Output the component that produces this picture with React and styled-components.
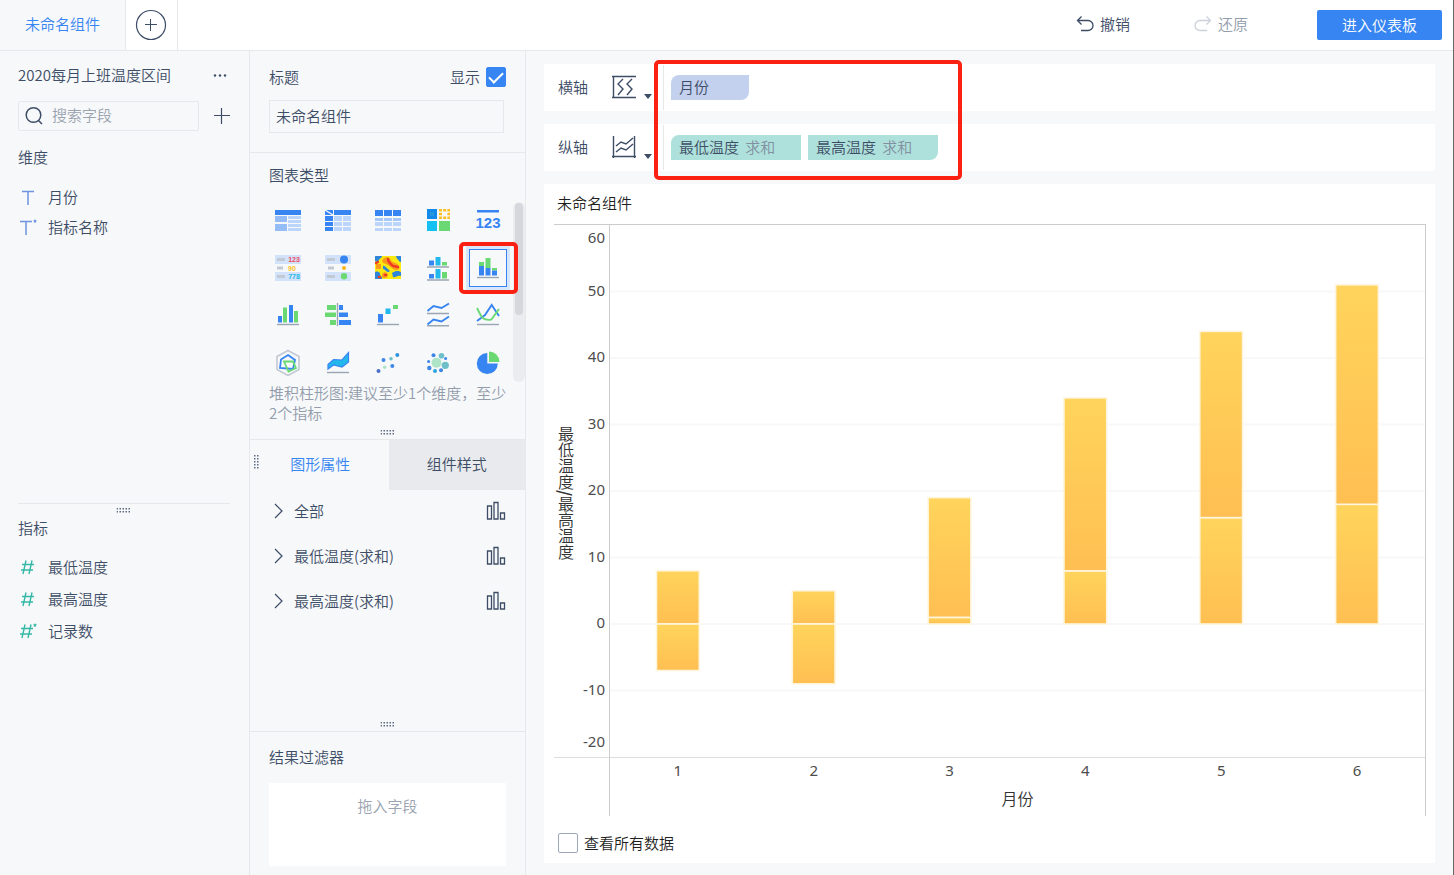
import React, { useState } from "react";
import styled, { createGlobalStyle } from "styled-components";

const BLUE = "#3685f2";
const GREEN = "#6bd973";
const CYAN = "#22b8ec";
const LIGHT = "#bcd5fa";
const LINE = "#9aa5b4";

const chartTypes = [
  "分组表",
  "交叉表",
  "明细表",
  "颜色表格",
  "KPI指标卡",
  "文本",
  "图标",
  "热力图",
  "多系列柱形图",
  "堆积柱形图",
  "对比柱状图",
  "对比条形图",
  "瀑布图",
  "多系列折线图",
  "折线图",
  "雷达图",
  "面积图",
  "散点图",
  "聚合气泡图",
  "饼图",
];

const dimensions = [
  { name: "月份", type: "text" },
  { name: "指标名称", type: "text", star: true },
];
const measures = [
  { name: "最低温度", type: "number" },
  { name: "最高温度", type: "number" },
  { name: "记录数", type: "number", star: true },
];
const attributes = ["全部", "最低温度(求和)", "最高温度(求和)"];

// every segment is [from, to] on the value axis
const months = [
  { month: 1, segments: [[0, 8], [-7, 0]] },
  { month: 2, segments: [[0, 5], [-9, 0]] },
  { month: 3, segments: [[0, 1], [1, 19]] },
  { month: 4, segments: [[0, 8], [8, 34]] },
  { month: 5, segments: [[0, 16], [16, 44]] },
  { month: 6, segments: [[0, 18], [18, 51]] },
];
const ticks = [60, 50, 40, 30, 20, 10, 0, -10, -20];
const MAX = 60;
const RANGE = 80;
const toY = (value) => ((MAX - value) / RANGE) * 100;

const chartIcons = [
  <>
    <path fill={BLUE} d="M1 3h26v5H1z" />
    <path fill="#94bdf8" d="M1 9h12v6H1zM1 17h12v7H1z" />
    <path fill={LIGHT} d="M14 9h13v3H14zM14 13h13v3H14zM14 17h13v3H14zM14 21h13v3H14z" />
  </>,
  <>
    <path fill={BLUE} d="M1 3h8v5H1zM10 3h17v5H10zM1 9h8v5H1zM1 15h8v4H1zM1 20h8v4H1z" />
    <path fill={LIGHT} d="M10 9h8v5h-8zM19 9h8v5h-8zM10 15h8v4h-8zM19 15h8v4h-8zM10 20h8v4h-8zM19 20h8v4h-8z" />
    <path stroke="#f7f8fa" strokeWidth="1.4" d="M1 3l8 5" />
  </>,
  <>
    <path fill={BLUE} d="M1 3h8v6H1zM10 3h8v6h-8zM19 3h8v6h-8z" />
    <path fill="#a5c8f9" d="M1 11h8v3H1zM10 11h8v3h-8zM19 11h8v3h-8z" />
    <path fill={LIGHT} d="M1 15h8v4H1zM10 15h8v4h-8zM19 15h8v4h-8zM1 21h8v3H1zM10 21h8v3h-8zM19 21h8v3h-8z" />
  </>,
  <>
    <path fill="#1489ec" d="M3 2h10v10H3z" />
    <path fill="#2697dd" d="M6 5h4v4H6z" />
    <path
      fill="#fbbf24"
      d="M15 2h3v2.500h-3zM19.200 2h3v2.500h-3zM23.400 2h2.600v2.500h-2.600zM15 5.800h3v2.500h-3zM23.400 5.800h2.600v2.500h-2.600zM15 9.500h3v2.500h-3zM19.200 9.500h3v2.500h-3zM23.400 9.500h2.600v2.500h-2.600z"
    />
    <path fill="#15c0f3" d="M3 14h10v10H3z" />
    <path fill={GREEN} d="M15 14h11v10H15z" />
  </>,
  <>
    <path fill={BLUE} d="M3 3h22v2.5H3z" />
    <text x="14" y="21" fontSize="15" fontWeight="700" textAnchor="middle" fill={BLUE}>123</text>
  </>,
  <>
    <path fill="#d3e2fb" d="M1 1h26v9H1zM1 18h26v9H1z" />
    <path fill="#c3c9d3" d="M3 4h8v3H3zM3 12.5h6v3H3zM3 21h8v3H3z" />
    <text x="20" y="8" fontSize="7" fontWeight="700" textAnchor="middle" fill="#ef4b5f">123</text>
    <text x="18" y="16.500" fontSize="7" fontWeight="700" textAnchor="middle" fill="#fbbf24">90</text>
    <text x="20" y="25" fontSize="7" fontWeight="700" textAnchor="middle" fill={CYAN}>778</text>
  </>,
  <>
    <path fill="#d3e2fb" d="M1 1h26v9H1zM1 18h26v9H1z" />
    <path fill="#c3c9d3" d="M3 4h8v3H3zM4 12.5h6v3H4zM3 21h8v3H3z" />
    <circle cx="20" cy="5.500" r="4" fill={BLUE} />
    <circle cx="20" cy="14" r="2" fill="#fbb414" />
    <circle cx="20" cy="22.300" r="3.200" fill={GREEN} />
  </>,
  <>
    <path fill="#fde910" d="M1 2h26v23H1z" />
    <path fill="#2f86d8" d="M1 2h7c0 2-2 2-3 4S2 8 1 7zM22 2h5v6c-3 0-2-3-4-3zM1 18c3-1 5 0 5 2s3 3 2 5H1zM18 19c4-3 7-2 9-1v4c-4-1-5 2-8 1zM9 12c2-1 3 2 5 3s2 3 0 3-3-3-5-3z" />
    <path fill="#fb9a1a" d="M9 5c3-3 7-2 8 1s6 2 8 6-3 5-6 3-4-4-7-5-5-2-3-5zM2 10h5v5H2zM8 20c2-3 6-2 6 1s-4 4-6 2z" />
    <path fill="none" stroke="#ee3a24" strokeWidth="2.400" strokeLinecap="round" d="M14 5c0 4 3 5 5 7l5 1M11 21h1M2 9l2-1M5 23l1 0" />
  </>,
  <>
    <path fill={BLUE} d="M5 6.500h5v5H5zM5 20h5v4.500H5z" />
    <path fill={CYAN} d="M11.500 3h5v8.500h-5zM11.500 15h5v9.500h-5z" />
    <path fill={GREEN} d="M18 8h5v3.500h-5zM18 18h5v6.500h-5z" />
    <path stroke={LINE} strokeWidth="1.400" d="M3 13h22M3 26h22" />
  </>,
  <>
    <path fill={GREEN} d="M5 8h5v4H5zM11.500 4h5v10h-5zM18 14h5v2.500h-5z" />
    <path fill={BLUE} d="M5 12h5v9.500H5zM11.500 14h5v7.500h-5zM18 16.500h5v5h-5z" />
    <path stroke={LINE} strokeWidth="1.400" d="M3 23.500h22" />
  </>,
  <>
    <path fill={BLUE} d="M4 15h4v6.500H4zM15 4h4v17.500h-4z" />
    <path fill={GREEN} d="M9 6.500h4v15H9zM20 10h4v11.500h-4z" />
    <path stroke={LINE} strokeWidth="1.400" d="M3 23.500h22" />
  </>,
  <>
    <path fill={GREEN} d="M3 4h9v5H3zM1 11.500h11v4.500H1zM6 19h6v5H6z" />
    <path fill={BLUE} d="M15 4h4v5h-4zM15 11.500h9v4.500h-9zM15 19h12v5H15z" />
    <path stroke={LINE} strokeWidth="1.400" d="M13.500 2v23" />
  </>,
  <>
    <path fill={BLUE} d="M4 13h5v8.500H4z" />
    <path fill={CYAN} d="M11.500 7.500h5v5.500h-5z" />
    <path fill={GREEN} d="M19 4h5v4h-5z" />
    <path stroke={LINE} strokeWidth="1.400" d="M3 23.500h22" />
  </>,
  <>
    <path fill="none" stroke={BLUE} strokeWidth="1.900" d="M3.500 10l6-5 8 2L25 2.500M3.500 23.500l6-5 8 2 7.500-5" />
    <path stroke={LINE} strokeWidth="1.400" d="M3 12.500h22M3 24.800h22" />
  </>,
  <>
    <path fill="none" stroke={BLUE} strokeWidth="1.900" d="M3 20l8-6 6.700-10L25 15" />
    <path fill="none" stroke={GREEN} strokeWidth="1.900" d="M3 7c4 8 5 11 9 11.500s5 1 6.500-1.500L25 8" />
    <path stroke={LINE} strokeWidth="1.400" d="M3 23.500h22" />
  </>,
  <>
    <path fill="none" stroke="#c3c9d3" strokeWidth="1.600" d="M14 2.500l11 6v13l-11 6-11-6v-13z" />
    <path fill="none" stroke={BLUE} strokeWidth="1.800" d="M14 7l7 5-2 9-13-1 1-8.500z" />
    <path fill="none" stroke={GREEN} strokeWidth="1.800" d="M10 13.500h9l3 6.500-7.500 3.500z" />
  </>,
  <>
    <path fill={CYAN} stroke={BLUE} strokeWidth="1.200" d="M4 16.500l5.500-5 8.500.500 6.500-7.500v9.500l-6.500 5-8.500-2-5.500 4z" />
    <path stroke={LINE} strokeWidth="1.400" d="M3 24.500h22" />
  </>,
  <>
    <circle cx="4.500" cy="23" r="2" fill="#4a6fc9" />
    <circle cx="9.500" cy="12" r="2" fill="#3f86e6" />
    <circle cx="10.700" cy="19.300" r="1.800" fill="#aee5c8" />
    <circle cx="17" cy="10.700" r="1.800" fill="#6fbfca" />
    <circle cx="18.300" cy="18" r="2" fill="#3f86e6" />
    <circle cx="23.300" cy="7" r="2" fill="#2f93dc" />
  </>,
  <>
    <circle cx="12.500" cy="14.700" r="5" fill="#aee5c8" />
    <circle cx="9.500" cy="7.200" r="2" fill="#3f86e6" />
    <circle cx="17.500" cy="7.700" r="2.800" fill="#6fbfca" />
    <circle cx="21.600" cy="10.500" r="1.500" fill="#3f86e6" />
    <circle cx="21.300" cy="17.300" r="3.600" fill="#6fbfca" />
    <circle cx="17" cy="22.200" r="2" fill="#3f86e6" />
    <circle cx="11" cy="23" r="2" fill="#2fa4dc" />
    <circle cx="5.300" cy="20" r="2.200" fill="#3f86e6" />
    <circle cx="4.600" cy="13.500" r="1.500" fill="#3f86e6" />
  </>,
  <>
    <path fill={BLUE} d="M13.300 15.500V5a10.500 10.500 0 1 0 10.500 10.500z" />
    <path fill={GREEN} d="M15 14V3.500A10.500 10.500 0 0 1 25.500 14z" />
  </>,
];

const Grip = ({ vertical }) => (
  <GripIcon width={vertical ? 5 : 15} height={vertical ? 15 : 5} $vertical={vertical}>
    {[0, 1, 2, 3, 4].map((i) =>
      [0, 3].map((j) => (
        <rect
          key={`${i}${j}`}
          x={vertical ? j : i * 3}
          y={vertical ? i * 3 : j}
          width="1.5"
          height="1.5"
          fill="#5d6b82"
        />
      ))
    )}
  </GripIcon>
);

const FieldIcon = ({ type, star }) => (
  <svg width="20" height="20" viewBox="0 0 20 20" fill="none" aria-hidden="true">
    {type === "text" ? (
      <path stroke="#6f93de" strokeWidth="1.500" d={star ? "M2 4.500h12M8 4.500V18" : "M4 4.500h12M10 4.500V18"} />
    ) : (
      <path
        stroke="#36b8a6"
        strokeWidth="1.400"
        d={star ? "M7 3.500L4 17M13 3.500L10 17M3 7.500h12M2 13h12" : "M8 3.500L5 17M14 3.500L11 17M4 7.500h12M3 13h12"}
      />
    )}
    {star && (
      <path
        fill={type === "text" ? "#6f93de" : "#36b8a6"}
        d="M17 2l.6 1.300 1.400.200-1 1 .200 1.500-1.200-.700-1.200.700.200-1.500-1-1 1.400-.200z"
      />
    )}
  </svg>
);

const Fields = ({ items, tall }) => (
  <FieldList>
    {items.map((item) => (
      <Field key={item.name} $tall={tall}>
        <FieldIcon type={item.type} star={item.star} />
        {item.name}
      </Field>
    ))}
  </FieldList>
);

const BarChart = () => (
  <Chart>
    <ValueAxis>
      <AxisTitle>
        最低温度<b>/</b>最高温度
      </AxisTitle>
      <TickLabels>
        {ticks.map((tick) => (
          <text
            key={tick}
            x="100%"
            y={`${toY(tick)}%`}
            dy={tick === 60 ? 18 : tick === -20 ? -10 : 4}
            textAnchor="end"
          >
            {tick}
          </text>
        ))}
      </TickLabels>
    </ValueAxis>
    <Plot>
      <svg width="100%" height="100%">
        <defs>
          <linearGradient id="bar" x1="0" y1="0" x2="0" y2="1">
            <stop offset="0" stopColor="#ffd45c" />
            <stop offset="1" stopColor="#ffbf52" />
          </linearGradient>
        </defs>
        {ticks.slice(1, -1).map((tick) => (
          <line key={tick} x1="0" x2="100%" y1={`${toY(tick)}%`} y2={`${toY(tick)}%`} stroke="#f8f8f9" strokeWidth="2" />
        ))}
        {months.map(({ month, segments }, i) =>
          segments.map(([from, to]) => (
            <rect
              key={`${month}${from}`}
              x={`${((i + 0.342) / 6) * 100}%`}
              y={`${toY(to)}%`}
              width="5.25%"
              height={`${((to - from) / RANGE) * 100}%`}
              fill="url(#bar)"
              stroke="#fff5de"
              strokeWidth="1.600"
            />
          ))
        )}
      </svg>
    </Plot>
    <Corner />
    <CategoryAxis>
      <Categories>
        {months.map(({ month }) => (
          <span key={month}>{month}</span>
        ))}
      </Categories>
      <CategoryTitle>月份</CategoryTitle>
    </CategoryAxis>
  </Chart>
);

const App = () => {
  const [selected, setSelected] = useState(9);
  const [tab, setTab] = useState(0);
  const [title, setTitle] = useState("未命名组件");
  const [showTitle, setShowTitle] = useState(true);
  const [allData, setAllData] = useState(false);

  return (
    <Page>
      <GlobalStyle />
      <Header>
        <ComponentTab>未命名组件</ComponentTab>
        <AddTab>
          <IconButton aria-label="添加组件">
            <svg width="32" height="32" viewBox="0 0 32 32" fill="none" stroke="#3d4d66">
              <circle cx="16" cy="16" r="14.500" strokeWidth="1.200" />
              <path d="M10 15.500h12M15.500 10v12" />
            </svg>
          </IconButton>
        </AddTab>
        <Actions>
          <HistoryButton>
            <svg width="18" height="18" viewBox="0 0 18 18" fill="none" stroke="currentColor" strokeWidth="1.300">
              <path d="M5.500 1.500L1.500 5.500l4 4M1.500 5.500H12a5 5 0 0 1 0 10H5" />
            </svg>
            撤销
          </HistoryButton>
          <HistoryButton disabled>
            <svg width="18" height="18" viewBox="0 0 18 18" fill="none" stroke="#ccd1d9" strokeWidth="1.300">
              <path d="M12.500 1.500l4 4-4 4M16.500 5.500H6a5 5 0 0 0 0 10h7" />
            </svg>
            还原
          </HistoryButton>
          <EnterButton>进入仪表板</EnterButton>
        </Actions>
      </Header>

      <Body>
        <Sidebar>
          <DimensionArea>
            <TableName>
              2020每月上班温度区间
              <IconButton aria-label="更多">
                <svg width="16" height="16" fill="#3d4d66">
                  <circle cx="3" cy="8.500" r="1.200" />
                  <circle cx="8" cy="8.500" r="1.200" />
                  <circle cx="13" cy="8.500" r="1.200" />
                </svg>
              </IconButton>
            </TableName>
            <SearchRow>
              <SearchBox>
                <svg width="20" height="20" viewBox="0 0 20 20" fill="none" stroke="#3d4d66" strokeWidth="1.500">
                  <circle cx="9.500" cy="9" r="7.300" />
                  <path d="M14.500 14.500l3.500 3.500" />
                </svg>
                <input type="text" placeholder="搜索字段" aria-label="搜索字段" />
              </SearchBox>
              <IconButton aria-label="添加字段">
                <svg width="16" height="16" fill="none" stroke="#3d4d66" strokeWidth="1.200">
                  <path d="M0 7.500h16M7.500 0v16" />
                </svg>
              </IconButton>
            </SearchRow>
            <FieldHeading>维度</FieldHeading>
            <Fields items={dimensions} />
          </DimensionArea>
          <MeasureArea>
            <Grip />
            <FieldHeading>指标</FieldHeading>
            <Fields items={measures} tall />
          </MeasureArea>
        </Sidebar>

        <Settings>
          <TitleSection>
            <TitleRow>
              <label htmlFor="title">标题</label>
              <CheckLabel>
                显示
                <Checkbox type="checkbox" checked={showTitle} onChange={() => setShowTitle(!showTitle)} />
              </CheckLabel>
            </TitleRow>
            <TitleInput id="title" type="text" value={title} onChange={(e) => setTitle(e.target.value)} />
          </TitleSection>

          <TypeSection>
            <SectionName>图表类型</SectionName>
            <TypeScroll>
              <TypeGrid>
                {chartTypes.map((name, i) => (
                  <TypeButton key={name} aria-label={name} $active={i === selected} onClick={() => setSelected(i)}>
                    <svg width="28" height="28" viewBox="0 0 28 28">
                      {chartIcons[i]}
                    </svg>
                    {i === 9 && <TypeMark />}
                  </TypeButton>
                ))}
              </TypeGrid>
              <Scrollbar>
                <ScrollThumb />
              </Scrollbar>
            </TypeScroll>
            <Hint>堆积柱形图:建议至少1个维度，至少2个指标</Hint>
            <Grip />
          </TypeSection>

          <AttributeSection>
            <Tabs>
              <Grip vertical />
              {["图形属性", "组件样式"].map((name, i) => (
                <Tab key={name} $active={i === tab} onClick={() => setTab(i)}>
                  {name}
                </Tab>
              ))}
            </Tabs>
            {attributes.map((name) => (
              <Attribute key={name}>
                <svg width="20" height="16" viewBox="0 0 20 16" fill="none" stroke="#3d4d66" strokeWidth="1.200">
                  <path d="M1 1l7 7-7 7" />
                </svg>
                <span>{name}</span>
                <svg width="20" height="20" viewBox="0 0 20 20" fill="none" stroke="#3d4d66" strokeWidth="1.300">
                  <path d="M1.500 5h4v13h-4zM8 1.500h4V18H8zM14.500 12h4v6h-4z" />
                </svg>
              </Attribute>
            ))}
            <Grip />
          </AttributeSection>

          <FilterSection>
            <SectionName>结果过滤器</SectionName>
            <DropArea>拖入字段</DropArea>
          </FilterSection>
        </Settings>

        <Main>
          <Axes>
            <AxisRow>
              <AxisName>横轴</AxisName>
              <AxisButton aria-label="横轴设置">
                <svg width="26" height="26" viewBox="0 0 26 26" fill="none" stroke="#3d4d66" strokeWidth="1.400">
                  <path d="M1 2.500h24M1 23.500h24M2.500 2.500v21M12 5L7 10l5 5-5 6M21 5l-5 5 5 5-5 6" />
                </svg>
                <Caret />
              </AxisButton>
              <Chips>
                <Chip $color="#c3d0ee" $first $last>
                  月份
                </Chip>
              </Chips>
            </AxisRow>
            <AxisRow>
              <AxisName>纵轴</AxisName>
              <AxisButton aria-label="纵轴设置">
                <svg width="26" height="26" viewBox="0 0 26 26" fill="none" stroke="#3d4d66" strokeWidth="1.400">
                  <path d="M2.500 2v22M23.500 2v22M1 22.500h24M5 12l5-4 5 2 7-6M5 18l5-4 5 2 7-6" />
                </svg>
                <Caret />
              </AxisButton>
              <Chips>
                <Chip $color="#aee1db" $wide $first>
                  最低温度 <em>求和</em>
                </Chip>
                <Chip $color="#aee1db" $wide $last>
                  最高温度 <em>求和</em>
                </Chip>
              </Chips>
            </AxisRow>
            <AxesMark />
          </Axes>

          <ChartCard>
            <ChartName>未命名组件</ChartName>
            <BarChart />
            <AllData>
              <Checkbox type="checkbox" checked={allData} onChange={() => setAllData(!allData)} />
              查看所有数据
            </AllData>
          </ChartCard>
        </Main>
      </Body>
    </Page>
  );
};

export default App;

const GlobalStyle = createGlobalStyle`
  * {
    box-sizing: border-box;
  }
  body {
    margin: 0;
    background: #f7f8fa;
  }
  body, button, input {
    font-family: "Noto Sans CJK SC", sans-serif;
    font-size: 15px;
    font-weight: 350;
    line-height: 20px;
    color: #3d4d66;
  }
  button {
    padding: 0;
    border: none;
    background: none;
    cursor: pointer;
  }
  svg {
    display: block;
    flex-shrink: 0;
  }
`;

const Page = styled.div`
  display: flex;
  flex-direction: column;
  min-height: 100vh;
  border-right: 1px solid #666;
`;

const Header = styled.header`
  display: flex;
  height: 51px;
  background: #fff;
  border-bottom: 1px solid #e6e8eb;
`;
const ComponentTab = styled.button`
  width: 126px;
  padding-bottom: 2px;
  background: #f7f8fa;
  border-right: 1px solid #e6e8eb;
  color: ${BLUE};
`;
const AddTab = styled.div`
  display: flex;
  align-items: center;
  justify-content: center;
  width: 52px;
  padding-right: 1px;
  border-right: 1px solid #e6e8eb;
`;
const IconButton = styled.button`
  display: flex;
`;
const Actions = styled.div`
  display: flex;
  align-items: center;
  margin-left: auto;
  padding-right: 11px;
`;
const HistoryButton = styled.button`
  display: flex;
  align-items: center;
  gap: 6px;
  margin-right: 64px;
  padding-bottom: 2px;

  &:disabled {
    color: #929cab;
  }
  & + & {
    margin-right: 69px;
  }
`;
const EnterButton = styled.button`
  width: 125px;
  height: 30px;
  border-radius: 2px;
  background: ${BLUE};
  color: #fff;
`;

const Body = styled.div`
  display: flex;
  flex: 1;
`;

const Sidebar = styled.aside`
  display: flex;
  flex-direction: column;
  flex: 0 0 250px;
  padding: 0 19px 0 18px;
  border-right: 1px solid #e6e8eb;
`;
const DimensionArea = styled.section`
  flex: 1;
`;
const TableName = styled.div`
  display: flex;
  align-items: center;
  justify-content: space-between;
  height: 50px;
  padding: 0 2px 2px 0;
`;
const SearchRow = styled.div`
  display: flex;
  align-items: center;
  justify-content: space-between;
  margin-bottom: 11px;
`;
const SearchBox = styled.div`
  display: flex;
  align-items: center;
  width: 181px;
  height: 30px;
  padding-left: 5px;
  border: 1px solid #e6e8eb;
  border-radius: 2px;

  input {
    flex: 1;
    min-width: 0;
    padding: 0 8px 2px;
    border: none;
    background: none;
    outline: none;
  }
  input::placeholder {
    color: #9aa3b0;
  }
`;
const FieldHeading = styled.div`
  line-height: 30px;
`;
const FieldList = styled.ul`
  margin: 10px 0 0;
  padding: 0;
  list-style: none;
`;
const Field = styled.li`
  display: flex;
  align-items: center;
  gap: 10px;
  height: ${({ $tall }) => ($tall ? "32px" : "30px")};
`;
const MeasureArea = styled.section`
  position: relative;
  flex: 0 0 372px;
  padding-top: 9px;
  border-top: 1px solid #e6e8eb;

  & > svg {
    top: 4px;
  }
  ul {
    margin-top: 8px;
  }
`;

const GripIcon = styled.svg`
  position: absolute;
  ${({ $vertical }) =>
    $vertical ? "left: 4px; top: 15px;" : "left: 50%; bottom: 4px; transform: translateX(-50%);"}
`;

const Settings = styled.aside`
  display: flex;
  flex-direction: column;
  flex: 0 0 276px;
  border-right: 1px solid #e6e8eb;
`;
const TitleSection = styled.section`
  height: 102px;
  padding: 12px 19px 0;
  border-bottom: 1px solid #e6e8eb;
`;
const TitleRow = styled.div`
  display: flex;
  align-items: center;
  justify-content: space-between;
  height: 28px;
  margin-bottom: 9px;
`;
const CheckLabel = styled.label`
  display: flex;
  align-items: center;
  gap: 6px;
`;
const Checkbox = styled.input`
  appearance: none;
  display: flex;
  align-items: center;
  justify-content: center;
  width: 20px;
  height: 20px;
  margin: 0;
  border: 1px solid #9ba8bb;
  border-radius: 2px;

  &:checked {
    border-color: ${BLUE};
    background: ${BLUE};
  }
  &:checked::after {
    content: "";
    width: 12px;
    height: 6px;
    margin-bottom: 3px;
    border: solid #fff;
    border-width: 0 0 2px 2px;
    transform: rotate(-45deg);
  }
`;
const TitleInput = styled.input`
  width: 235px;
  height: 33px;
  padding: 0 6px 3px;
  border: 1px solid #e6e8eb;
  background: none;
  outline: none;
`;
const TypeSection = styled.section`
  position: relative;
  height: 287px;
  padding: 7px 0 0 19px;
  border-bottom: 1px solid #e6e8eb;
`;
const SectionName = styled.div`
  line-height: 30px;
`;
const TypeScroll = styled.div`
  display: flex;
  justify-content: space-between;
  height: 180px;
  margin-top: 12px;
`;
const TypeGrid = styled.div`
  display: grid;
  grid-template-columns: repeat(5, 38px);
  grid-auto-rows: 38px;
  gap: 9px 12px;

  text {
    font-family: "Liberation Sans Narrow", "Liberation Sans", sans-serif;
  }
`;
const TypeButton = styled.button`
  position: relative;
  display: flex;
  align-items: center;
  justify-content: center;
  border: 1px solid ${({ $active }) => ($active ? BLUE : "transparent")};
  box-shadow: ${({ $active }) => ($active ? "0 0 0 3px #d8e6fb" : "none")};
`;
const TypeMark = styled.span`
  position: absolute;
  inset: -8px -12px -8px -11px;
  border: 4px solid #fb2112;
  border-radius: 5px;
  z-index: 1;
`;
const Scrollbar = styled.div`
  width: 12px;
  padding: 1px 2px;
  border-radius: 6px;
  background: #ebecef;
`;
const ScrollThumb = styled.div`
  height: 112px;
  border-radius: 4px;
  background: #d5d7dc;
`;
const Hint = styled.div`
  width: 240px;
  margin-top: 1px;
  color: #929cab;
`;
const AttributeSection = styled.section`
  position: relative;
  flex: 1;
`;
const Tabs = styled.div`
  display: flex;
  height: 50px;
  padding-left: 2px;
`;
const Tab = styled.button`
  flex: 1;
  padding-bottom: 2px;
  background: ${({ $active }) => ($active ? "none" : "#e8eaed")};
  color: ${({ $active }) => ($active ? BLUE : "#3d4d66")};
`;
const Attribute = styled.div`
  display: flex;
  align-items: center;
  height: 45px;
  padding: 0 19px 4px 24px;

  span {
    flex: 1;
  }
`;
const FilterSection = styled.section`
  flex: 0 0 144px;
  padding: 10px 19px 0;
  border-top: 1px solid #e6e8eb;
`;
const DropArea = styled.div`
  height: 83px;
  margin-top: 11px;
  padding-top: 13px;
  background: #fff;
  color: #9aa3b0;
  text-align: center;
`;

const Main = styled.main`
  display: flex;
  flex-direction: column;
  flex: 1;
  min-width: 0;
  padding: 13px 18px 12px;
`;
const Axes = styled.div`
  position: relative;
`;
const AxisRow = styled.div`
  display: flex;
  align-items: center;
  height: 47px;
  margin-bottom: 13px;
  padding: 1px 0 1px 14px;
  background: #fff;
`;
const AxisName = styled.span`
  width: 53px;
  padding-bottom: 2px;
`;
const AxisButton = styled.button`
  display: flex;
  align-items: flex-end;
  gap: 7px;
  width: 52px;
  padding-bottom: 2px;
`;
const Caret = styled.span`
  border: 4px solid transparent;
  border-top: 5px solid #3d4d66;
  margin-bottom: -3px;
`;
const Chips = styled.div`
  display: flex;
  align-items: center;
  align-self: stretch;
  gap: 7px;
  padding-left: 7px;
  border-left: 1px solid #e6e8eb;
`;
const Chip = styled.div`
  width: ${({ $wide }) => ($wide ? "130px" : "78px")};
  padding: 0 0 2px 8px;
  border-radius: ${({ $first, $last }) => `${$first ? 8 : 0}px 0 ${$last ? 8 : 0}px 0`};
  background: ${({ $color }) => $color};
  line-height: 23px;

  em {
    margin-left: 3px;
    color: #8290a2;
    font-style: normal;
  }
`;
const AxesMark = styled.div`
  position: absolute;
  top: -4px;
  bottom: 4px;
  left: 110px;
  width: 308px;
  border: 4px solid #fb2112;
  border-radius: 5px;
`;

const ChartCard = styled.section`
  display: flex;
  flex-direction: column;
  flex: 1;
  padding: 0 9px 10px 10px;
  background: #fff;
  color: #1f1f1f;
`;
const ChartName = styled.div`
  padding: 0 0 2px 3px;
  line-height: 38px;
`;
const Chart = styled.div`
  display: grid;
  grid-template-columns: 55px 1fr;
  grid-template-rows: 1fr 59px;
  flex: 1;
  border-top: 1px solid #ccc;
  font-size: 16px;
  color: #333;
`;
const ValueAxis = styled.div`
  display: flex;
  align-items: center;
  padding-right: 4px;
`;
const AxisTitle = styled.div`
  width: 24px;
  padding-top: 4px;
  line-height: 24px;
  writing-mode: vertical-rl;
  text-align: center;
`;
const TickLabels = styled.svg`
  width: 27px;
  height: 100%;
  font-family: "Noto Sans", sans-serif;
  font-size: 15px;
  font-weight: 400;
  fill: #4d4d4d;
  overflow: visible;
`;
const Plot = styled.div`
  position: relative;
  border: solid #ccc;
  border-width: 0 1px;

  svg {
    position: absolute;
    inset: 0;
  }
`;
const Corner = styled.div`
  border-top: 1px solid #ddd;
`;
const CategoryAxis = styled.div`
  border: solid #ccc;
  border-width: 1px 1px 0;
  border-top-color: #ddd;
  text-align: center;
`;
const Categories = styled.div`
  display: grid;
  grid-template-columns: repeat(6, 1fr);
  color: #4d4d4d;
  font-family: "Noto Sans", sans-serif;
  font-size: 15px;
  font-weight: 400;
  line-height: 24px;
`;
const CategoryTitle = styled.div`
  line-height: 32px;
`;
const AllData = styled.label`
  display: flex;
  align-items: center;
  align-self: flex-start;
  gap: 6px;
  margin-top: 17px;
  padding-left: 4px;
`;
